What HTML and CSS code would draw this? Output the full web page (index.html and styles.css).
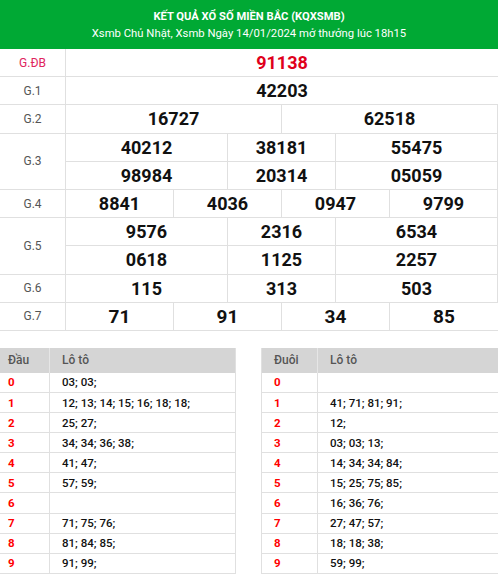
FILE: index.html
```html
<!DOCTYPE html>
<html lang="vi">
<head>
<meta charset="utf-8">
<title>KQXSMB</title>
<link rel="stylesheet" href="styles.css">
</head>
<body>
<div class="page">
  <header class="banner">
    <h1 class="banner-title">KẾT QUẢ XỔ SỐ MIỀN BẮC (KQXSMB)</h1>
    <p class="banner-sub">Xsmb Chủ Nhật, Xsmb Ngày 14/01/2024 mở thưởng lúc 18h15</p>
  </header>

  <div class="results">
    <div class="label special-label">G.ĐB</div>
    <div class="num special span-8">91138</div>

    <div class="label">G.1</div>
    <div class="num span-8">42203</div>

    <div class="label">G.2</div>
    <div class="num span-4">16727</div>
    <div class="num span-4">62518</div>

    <div class="label rows-2">G.3</div>
    <div class="num span-3">40212</div>
    <div class="num span-2">38181</div>
    <div class="num span-3">55475</div>
    <div class="num span-3">98984</div>
    <div class="num span-2">20314</div>
    <div class="num span-3">05059</div>

    <div class="label">G.4</div>
    <div class="num span-2">8841</div>
    <div class="num span-2">4036</div>
    <div class="num span-2">0947</div>
    <div class="num span-2">9799</div>

    <div class="label rows-2">G.5</div>
    <div class="num span-3">9576</div>
    <div class="num span-2">2316</div>
    <div class="num span-3">6534</div>
    <div class="num span-3">0618</div>
    <div class="num span-2">1125</div>
    <div class="num span-3">2257</div>

    <div class="label">G.6</div>
    <div class="num span-3">115</div>
    <div class="num span-2">313</div>
    <div class="num span-3">503</div>

    <div class="label">G.7</div>
    <div class="num big span-2">71</div>
    <div class="num big span-2">91</div>
    <div class="num big span-2">34</div>
    <div class="num big span-2">85</div>
  </div>

  <div class="loto-wrap">
    <div class="loto loto-left">
      <div class="lh">Đầu</div><div class="lh">Lô tô</div>
      <div class="ld">0</div><div class="lv">03; 03;</div>
      <div class="ld">1</div><div class="lv">12; 13; 14; 15; 16; 18; 18;</div>
      <div class="ld">2</div><div class="lv">25; 27;</div>
      <div class="ld">3</div><div class="lv">34; 34; 36; 38;</div>
      <div class="ld">4</div><div class="lv">41; 47;</div>
      <div class="ld">5</div><div class="lv">57; 59;</div>
      <div class="ld">6</div><div class="lv"></div>
      <div class="ld">7</div><div class="lv">71; 75; 76;</div>
      <div class="ld">8</div><div class="lv">81; 84; 85;</div>
      <div class="ld">9</div><div class="lv">91; 99;</div>
    </div>
    <div class="loto loto-right">
      <div class="lh">Đuôi</div><div class="lh">Lô tô</div>
      <div class="ld">0</div><div class="lv"></div>
      <div class="ld">1</div><div class="lv">41; 71; 81; 91;</div>
      <div class="ld">2</div><div class="lv">12;</div>
      <div class="ld">3</div><div class="lv">03; 03; 13;</div>
      <div class="ld">4</div><div class="lv">14; 34; 34; 84;</div>
      <div class="ld">5</div><div class="lv">15; 25; 75; 85;</div>
      <div class="ld">6</div><div class="lv">16; 36; 76;</div>
      <div class="ld">7</div><div class="lv">27; 47; 57;</div>
      <div class="ld">8</div><div class="lv">18; 18; 38;</div>
      <div class="ld">9</div><div class="lv">59; 99;</div>
    </div>
  </div>
</div>
</body>
</html>
```

FILE: styles.css
```css
* { box-sizing: border-box; }

html, body {
  margin: 0;
  padding: 0;
  background: #fff;
}

body {
  font-family: Roboto, "Liberation Sans", Arial, sans-serif;
  color: #111;
  width: 498px;
  overflow: hidden;
}

.banner {
  background: #00a934;
  color: #fff;
  height: 49px;
  display: flex;
  flex-direction: column;
  align-items: center;
  justify-content: center;
  gap: 3px;
  padding-top: 1px;
}

.banner-title {
  margin: 0;
  font-size: 11.2px;
  font-weight: 700;
  line-height: 14px;
}

.banner-sub {
  margin: 0;
  font-size: 11.3px;
  font-weight: 400;
  line-height: 14px;
}

.results {
  display: grid;
  grid-template-columns: 66px repeat(8, 1fr);
  grid-auto-rows: 28.2px;
}

.results > div {
  display: flex;
  align-items: center;
  justify-content: center;
  border-right: 1px solid #e0e0e0;
  border-bottom: 1px solid #e0e0e0;
}

.results > div:last-child,
.results .span-8 { border-right: none; }

.label {
  font-size: 12px;
  color: #555;
}

.special-label { color: #e0245e; }

.rows-2 { grid-row: span 2; }

.num {
  font-size: 18px;
  font-weight: 700;
  color: #111;
}

.num.big { font-size: 19px; }

.num.special { color: #e0001b; }

.span-2 { grid-column: span 2; }
.span-3 { grid-column: span 3; }
.span-4 { grid-column: span 4; }
.span-8 { grid-column: span 8; }

.loto-wrap {
  display: flex;
  justify-content: space-between;
  margin-top: 17px;
}

.loto {
  display: grid;
  width: 237px;
  grid-template-rows: 25px repeat(10, 20.1px);
  font-size: 11.5px;
}

.loto-left { grid-template-columns: 50px 1fr; width: 236px; }
.loto-right { grid-template-columns: 56px 1fr; border-left: 1px solid #e0e0e0; }

.loto > div {
  display: flex;
  align-items: center;
  border-bottom: 1px solid #e0e0e0;
  padding-left: 12px;
}

.loto > div:nth-child(odd) { border-right: 1px solid #e0e0e0; }
.loto-left > div:nth-child(even) { border-right: 1px solid #e0e0e0; }

.loto-left > div:nth-child(odd) { padding-left: 8px; }

.loto > .lh {
  background: #d5d5d5;
  color: #555;
  font-weight: 500;
  border-bottom: none;
  font-size: 12px;
}

.loto > .lh:first-child { border-right: 1px solid #e6e6e6; }

.ld {
  color: #ff0000;
  font-weight: 700;
}

.lv {
  color: #111;
  font-weight: 500;
}
```
